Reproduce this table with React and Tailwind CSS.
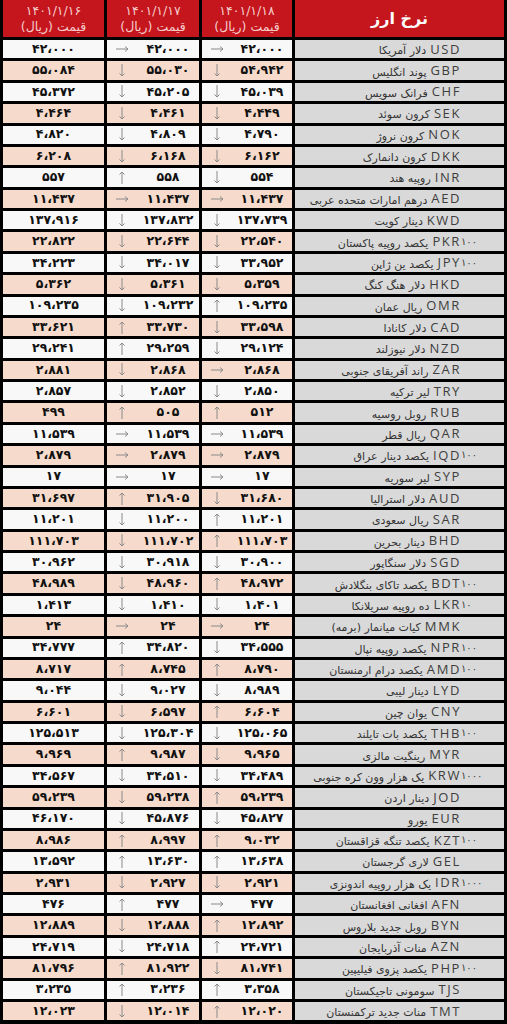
import React from "react";

const rows = [
  ["USD", "", "دلار آمریکا", "42,000", "r", "42,000", "r", "42,000"],
  ["GBP", "", "پوند انگلیس", "55,084", "d", "55,030", "d", "54,942"],
  ["CHF", "", "فرانک سویس", "45,372", "d", "45,205", "d", "45,039"],
  ["SEK", "", "کرون سوئد", "4,464", "d", "4,461", "d", "4,449"],
  ["NOK", "", "کرون نروژ", "4,820", "d", "4,809", "d", "4,790"],
  ["DKK", "", "کرون دانمارک", "6,208", "d", "6,168", "d", "6,162"],
  ["INR", "", "روپیه هند", "557", "u", "558", "d", "554"],
  ["AED", "", "درهم امارات متحده عربی", "11,437", "r", "11,437", "r", "11,437"],
  ["KWD", "", "دینار کویت", "137,916", "d", "137,832", "d", "137,739"],
  ["PKR", "100", "یکصد روپیه پاکستان", "22,822", "d", "22,644", "d", "22,540"],
  ["JPY", "100", "یکصد ین ژاپن", "34,223", "d", "34,017", "d", "33,952"],
  ["HKD", "", "دلار هنگ کنگ", "5,362", "d", "5,361", "d", "5,359"],
  ["OMR", "", "ریال عمان", "109,235", "d", "109,232", "u", "109,235"],
  ["CAD", "", "دلار کانادا", "33,621", "u", "33,730", "d", "33,598"],
  ["NZD", "", "دلار نیوزلند", "29,241", "u", "29,259", "d", "29,124"],
  ["ZAR", "", "راند آفریقای جنوبی", "2,881", "d", "2,868", "r", "2,868"],
  ["TRY", "", "لیر ترکیه", "2,857", "d", "2,852", "d", "2,850"],
  ["RUB", "", "روبل روسیه", "499", "u", "505", "u", "512"],
  ["QAR", "", "ریال قطر", "11,539", "r", "11,539", "r", "11,539"],
  ["IQD", "100", "یکصد دینار عراق", "2,879", "r", "2,879", "r", "2,879"],
  ["SYP", "", "لیر سوریه", "17", "r", "17", "r", "17"],
  ["AUD", "", "دلار استرالیا", "31,697", "u", "31,905", "d", "31,680"],
  ["SAR", "", "ریال سعودی", "11,201", "d", "11,200", "u", "11,201"],
  ["BHD", "", "دینار بحرین", "111,703", "d", "111,702", "u", "111,703"],
  ["SGD", "", "دلار سنگاپور", "30,962", "d", "30,918", "d", "30,900"],
  ["BDT", "100", "یکصد تاکای بنگلادش", "48,989", "d", "48,960", "u", "48,972"],
  ["LKR", "10", "ده روپیه سریلانکا", "1,413", "d", "1,410", "d", "1,401"],
  ["MMK", "", "کیات میانمار (برمه)", "24", "r", "24", "r", "24"],
  ["NPR", "100", "یکصد روپیه نپال", "34,777", "u", "34,820", "d", "34,555"],
  ["AMD", "100", "یکصد درام ارمنستان", "8,717", "u", "8,745", "u", "8,790"],
  ["LYD", "", "دینار لیبی", "9,044", "d", "9,027", "d", "8,989"],
  ["CNY", "", "یوان چین", "6,601", "d", "6,597", "u", "6,604"],
  ["THB", "100", "یکصد بات تایلند", "125,513", "d", "125,304", "d", "125,065"],
  ["MYR", "", "رینگیت مالزی", "9,969", "u", "9,987", "d", "9,965"],
  ["KRW", "1000", "یک هزار وون کره جنوبی", "34,567", "d", "34,510", "d", "34,489"],
  ["JOD", "", "دینار اردن", "59,239", "d", "59,238", "u", "59,239"],
  ["EUR", "", "یورو", "46,170", "d", "45,876", "d", "45,827"],
  ["KZT", "100", "یکصد تنگه قزاقستان", "8,986", "u", "8,997", "u", "9,032"],
  ["GEL", "", "لاری گرجستان", "13,592", "u", "13,630", "u", "13,638"],
  ["IDR", "1000", "یک هزار روپیه اندونزی", "2,931", "d", "2,927", "d", "2,921"],
  ["AFN", "", "افغانی افغانستان", "476", "u", "477", "r", "477"],
  ["BYN", "", "روبل جدید بلاروس", "12,889", "d", "12,888", "u", "12,892"],
  ["AZN", "", "منات آذربایجان", "24,719", "d", "24,718", "u", "24,721"],
  ["PHP", "100", "یکصد پزوی فیلیپین", "81,796", "u", "81,922", "d", "81,741"],
  ["TJS", "", "سومونی تاجیکستان", "3,235", "u", "3,236", "u", "3,358"],
  ["TMT", "", "منات جدید ترکمنستان", "12,023", "d", "12,014", "u", "12,020"],
];

const fa = (s) =>
  s.replace(/[0-9]/g, (d) => "۰۱۲۳۴۵۶۷۸۹"[+d]).replace(/,/g, "،");

function Arrow({ dir }) {
  if (dir === "r") {
    return (
      <svg width="13" height="8" viewBox="0 0 13 8" fill="none" stroke="#8a8a8a" strokeWidth="1">
        <path d="M0 4H12M9 1.5L12 4L9 6.5" />
      </svg>
    );
  }
  if (dir === "u") {
    return (
      <svg width="8" height="13" viewBox="0 0 8 13" fill="none" stroke="#8a8a8a" strokeWidth="1">
        <path d="M4 1V13M1.5 3.5L4 1L6.5 3.5" />
      </svg>
    );
  }
  return (
    <svg width="8" height="13" viewBox="0 0 8 13" fill="none" stroke="#8a8a8a" strokeWidth="1">
      <path d="M4 0V12M1.5 9.5L4 12L6.5 9.5" />
    </svg>
  );
}

const numCls =
  "font-['DejaVu_Sans',sans-serif] font-bold text-[12.5px] leading-none text-[#111] tracking-[-0.8px]";

function HeaderDate({ date }) {
  return (
    <div className="bg-[#c5161d] flex flex-col items-center justify-center gap-[2px] text-[#f5cccc] font-['DejaVu_Sans',sans-serif] text-[12.5px] leading-[14px]">
      <div>{fa(date)}</div>
      <div dir="rtl">قیمت (ریال)</div>
    </div>
  );
}

export default function App() {
  return (
    <div className="w-[507px] h-[1024px] bg-black flex flex-col gap-[3px] px-[3px] pb-[4px] overflow-hidden">
      <div className="h-[37px] shrink-0 grid grid-cols-[101px_92px_90px_209px] gap-x-[3px]">
        <HeaderDate date="1401/1/16" />
        <HeaderDate date="1401/1/17" />
        <HeaderDate date="1401/1/18" />
        <div
          className="bg-[#c5161d] flex items-center justify-center text-white font-['DejaVu_Sans',sans-serif] font-bold text-[16px]"
          dir="rtl"
        >
          نرخ ارز
        </div>
      </div>
      {rows.map((r, i) => {
        const bg = i % 2 === 0 ? "bg-[#f8f8f8]" : "bg-[#f6dbcc]";
        return (
          <div key={r[0]} className="flex-1 min-h-0 grid grid-cols-[101px_92px_90px_209px] gap-x-[3px]">
            <div className={`${bg} flex items-center justify-center ${numCls}`}>{fa(r[3])}</div>
            <div className={`${bg} flex items-center`}>
              <div className="w-[30px] flex justify-center">
                <Arrow dir={r[4]} />
              </div>
              <div className={`flex-1 text-center ${numCls}`}>{fa(r[5])}</div>
            </div>
            <div className={`${bg} flex items-center`}>
              <div className="w-[30px] flex justify-center">
                <Arrow dir={r[6]} />
              </div>
              <div className={`flex-1 text-center ${numCls}`}>{fa(r[7])}</div>
            </div>
            <div className="bg-[#d9d9d9] flex items-center justify-end pr-[18px] whitespace-nowrap">
              <span
                dir="rtl"
                className="font-['DejaVu_Sans',sans-serif] text-[11px] leading-none text-[#333] mr-[4px] mt-[3px]"
              >
                {r[2]}
              </span>
              <span className="font-['Open_Sans',sans-serif] text-[13px] leading-none text-[#3d3d3d] tracking-[1.6px]">
                {r[0]}
              </span>
              <span className="w-[25px] text-left font-['DejaVu_Sans',sans-serif] text-[10px] leading-none text-[#3d3d3d] tracking-[0.5px]">
                {r[1] ? fa(r[1]) : ""}
              </span>
            </div>
          </div>
        );
      })}
    </div>
  );
}
